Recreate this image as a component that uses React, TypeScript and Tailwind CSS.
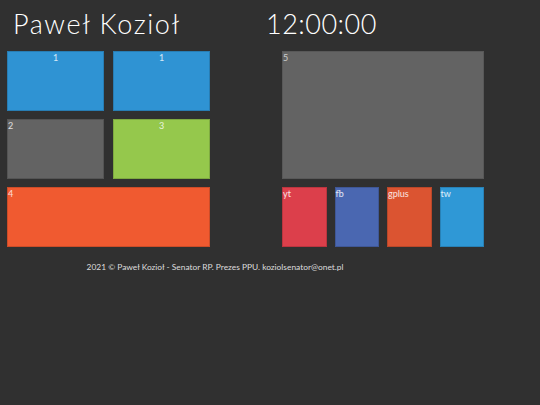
const tiles = [
  { label: "1", color: "bg-[#2f93d3]", center: true },
  { label: "1", color: "bg-[#2f93d3]", center: true },
  { label: "2", color: "bg-[#636363]", center: false },
  { label: "3", color: "bg-[#95c84c]", center: true },
];

const social = [
  { label: "yt", color: "bg-[#dc3f4b]" },
  { label: "fb", color: "bg-[#4a67b1]" },
  { label: "gplus", color: "bg-[#db5431]" },
  { label: "tw", color: "bg-[#2f98d6]" },
];

export default function App() {
  return (
    <div className="min-h-[405px] w-[540px] bg-[#303030] text-white font-['Lato','Liberation_Sans',sans-serif]">
      <header className="flex h-[45px] items-center pl-[13px] pt-[1px]">
        <h1 className="w-[253px] text-[27px] font-light tracking-[1.6px] leading-none">Paweł Kozioł</h1>
        <span className="text-[27px] font-light tracking-[0.5px] leading-none">12:00:00</span>
      </header>

      <main className="mt-[6px] flex gap-[72px] pl-[7px]">
        <div className="grid w-[203px] grid-cols-2 gap-x-[9px] gap-y-[8px]">
          {tiles.map((t, i) => (
            <div
              key={i}
              className={`h-[60px] border border-black/15 ${t.color} text-[9px] leading-[11px] text-white/80 ${t.center ? "text-center" : "text-left"}`}
            >
              {t.label}
            </div>
          ))}
          <div className="col-span-2 h-[60px] border border-black/15 bg-[#f05a30] text-[9px] leading-[11px] text-white/80">
            4
          </div>
        </div>

        <div className="flex w-[202px] flex-col gap-[8px]">
          <div className="h-[128px] border border-black/10 bg-[#636363] text-[9px] leading-[11px] text-white/70">5</div>
          <div className="grid grid-cols-4 gap-[8px]">
            {social.map((s) => (
              <div key={s.label} className={`h-[60px] border border-black/15 ${s.color} text-[9px] leading-[11px] text-white/85`}>
                {s.label}
              </div>
            ))}
          </div>
        </div>
      </main>

      <footer className="mt-[14px] w-[430px] text-center text-[8.4px] text-[#dddddd]">
        2021 © Paweł Kozioł - Senator RP. Prezes PPU. koziolsenator@onet.pl
      </footer>
    </div>
  );
}
